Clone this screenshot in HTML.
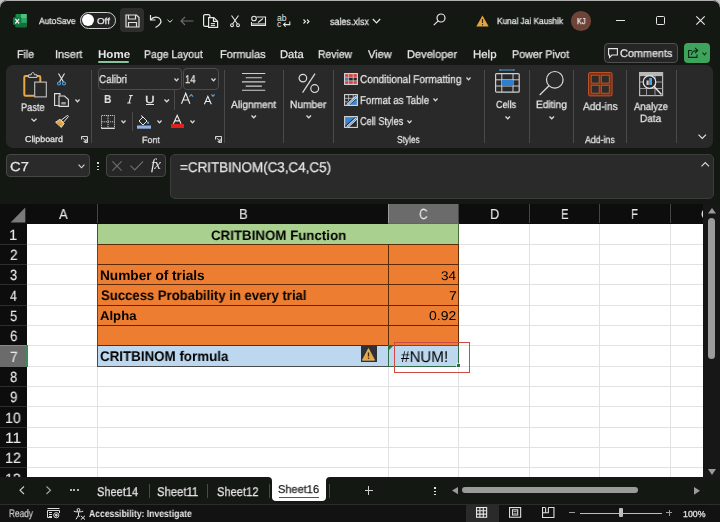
<!DOCTYPE html>
<html><head><meta charset="utf-8"><style>
html,body{margin:0;padding:0;width:720px;height:522px;overflow:hidden;background:#c4c4c4}
.t{position:absolute;white-space:nowrap;transform-origin:0 0;text-rendering:geometricPrecision;will-change:transform}
.a{position:absolute}
svg.a{overflow:visible}
</style></head><body>
<!-- window background -->
<div class=a style="left:0;top:0;width:720px;height:522px;background:#131812;border-radius:7px 7px 0 0;box-shadow:inset 0 1px 0 #b0b0b0"></div>
<!-- TITLE BAR -->
<svg class=a style="left:12.5px;top:13.8px" width="14" height="13.5" viewBox="0 0 14 13.5">
 <rect x="2.5" y="0" width="11.2" height="13.3" rx="1" fill="#1b8a4c"/>
 <rect x="8" y="0" width="5.7" height="4.5" fill="#4cc184"/><rect x="8" y="4.5" width="5.7" height="4.4" fill="#2fa866"/><rect x="2.5" y="8.9" width="11.2" height="4.4" fill="#176e3d"/>
 <rect x="0" y="3.2" width="8.4" height="7.9" rx="0.8" fill="#0f7a40"/>
 <path d="M2.3 4.9 L6.1 9.5 M6.1 4.9 L2.3 9.5" stroke="#f4f4f4" stroke-width="1.2"/>
</svg>
<div class=a style="left:79.9px;top:12px;width:33.7px;height:14.7px;border:1.3px solid #d0d0d0;border-radius:999px;background:#222"></div>
<div class=a style="left:82.4px;top:14.4px;width:11.9px;height:11.9px;border-radius:50%;background:#fff"></div>
<div class=a style="left:120.3px;top:8.3px;width:24px;height:23.7px;border-radius:4px;background:#2e2f2d"></div>
<svg class=a style="left:124.7px;top:14.2px" width="15" height="14" viewBox="0 0 15 14" fill="none" stroke="#e0e0e0" stroke-width="1.2">
 <path d="M1 1 H11.5 L14 3.5 V13 H1 Z"/><path d="M3.5 1 V5 H10.5 V1"/><path d="M3.5 13 V8.5 H11.5 V13"/>
</svg>
<svg class=a style="left:149px;top:14px" width="14" height="14" viewBox="0 0 14 14" fill="none" stroke="#e6e6e6" stroke-width="1.2">
 <path d="M1.5 1 V6 H6.5"/><path d="M1.8 5.8 C4 2.5 9.5 2 11.5 5.5 C13 8.5 11 11 6.5 13.5"/>
</svg>
<svg class=a style="left:166.5px;top:19px" width="6" height="4" viewBox="0 0 6 4" fill="none" stroke="#e6e6e6" stroke-width="1"><path d="M0.5 0.8 L3 3.2 L5.5 0.8"/></svg>
<svg class=a style="left:180px;top:16px" width="14" height="10" viewBox="0 0 14 10" fill="none" stroke="#6e6e6e" stroke-width="1.1"><path d="M13.5 5 H1 M5 1 L1 5 L5 9"/></svg>
<svg class=a style="left:203px;top:14px" width="16" height="14" viewBox="0 0 16 14" fill="none" stroke="#e6e6e6" stroke-width="1.2">
 <path d="M5 12.4 H2 A1.4 1.4 0 0 1 0.6 11 V2 A1.4 1.4 0 0 1 2 0.6 H5.5 A1.4 1.4 0 0 1 6.9 2 V3"/><path d="M5.6 3.6 H10.8 L14.6 7.2 V13.4 H5.6 Z"/><path d="M10.5 3.8 V7.4 H14.4"/><path d="M7.8 9.6 H12 M7.8 11.4 H12" stroke-width="1"/>
</svg>
<svg class=a style="left:229.5px;top:15px" width="10" height="12" viewBox="0 0 10 12" fill="none" stroke="#e6e6e6" stroke-width="1.1">
 <path d="M1.5 0.5 L7.5 9 M8.5 0.5 L2.5 9"/><circle cx="2" cy="10.2" r="1.4"/><circle cx="8" cy="10.2" r="1.4"/>
</svg>
<svg class=a style="left:250.5px;top:14.5px" width="15" height="11" viewBox="0 0 15 11" fill="none" stroke="#e6e6e6" stroke-width="1.1">
 <path d="M5.5 2 H14.5 V10.5 H0.5 V7"/><circle cx="3" cy="3.5" r="2.3"/><path d="M7 7.5 L12 3.5"/><path d="M1 9 H14"/>
</svg>
<svg class=a style="left:276.5px;top:14px" width="14" height="14" viewBox="0 0 14 14" fill="none" stroke="#e6e6e6" stroke-width="1.1">
 <text x="0" y="6.6" font-family="Liberation Sans" font-size="8.6" fill="#e6e6e6" stroke="none" textLength="9.5">ab</text>
 <text x="0" y="13" font-family="Liberation Sans" font-size="8.6" fill="#e6e6e6" stroke="none">c</text>
 <path d="M12.8 7.5 V10.6 H6.6 M8.6 8.6 L6.6 10.6 L8.6 12.6"/>
</svg>
<svg class=a style="left:303px;top:19px" width="7" height="5" viewBox="0 0 7 5" fill="none" stroke="#e6e6e6" stroke-width="1.1"><path d="M0.5 0.5 L2.5 2.5 L0.5 4.5 M4 0.5 L6 2.5 L4 4.5"/></svg>
<svg class=a style="left:372px;top:17.5px" width="9" height="6" viewBox="0 0 9 6" fill="none" stroke="#e6e6e6" stroke-width="1.2"><path d="M0.8 1 L4.5 4.8 L8.2 1"/></svg>
<svg class=a style="left:433px;top:13px" width="13" height="13" viewBox="0 0 13 13" fill="none" stroke="#e6e6e6" stroke-width="1.2"><circle cx="8" cy="5" r="4"/><path d="M5.2 7.8 L0.8 12.2"/></svg>
<svg class=a style="left:476px;top:14.5px" width="13" height="12" viewBox="0 0 13 12"><path d="M6.5 0.5 L12.7 11.6 H0.3 Z" fill="#e8a33d"/><path d="M6.5 4 V8" stroke="#3a2a10" stroke-width="1.2"/><circle cx="6.5" cy="9.8" r="0.7" fill="#3a2a10"/></svg>
<div class=a style="left:571.4px;top:11.2px;width:19.6px;height:19.6px;border-radius:50%;background:#6d4437"></div>
<div class=a style="left:616.3px;top:20px;width:9px;height:1.2px;background:#e6e6e6"></div>
<div class=a style="left:655.8px;top:16.3px;width:7.2px;height:6.8px;border:1.2px solid #e6e6e6;border-radius:1.5px"></div>
<svg class=a style="left:695.8px;top:16.3px" width="9" height="9" viewBox="0 0 9 9" fill="none" stroke="#e6e6e6" stroke-width="1.15"><path d="M0.3 0.3 L8.7 8.7 M8.7 0.3 L0.3 8.7"/></svg>
<!-- MENU -->
<div class=a style="left:98.4px;top:61.2px;width:31px;height:1.8px;background:#86c59c;border-radius:1px"></div>
<div class=a style="left:604.3px;top:43.2px;width:71.5px;height:17.7px;border:1px solid #4f4f4f;border-radius:4px;background:#252525"></div>
<svg class=a style="left:607.5px;top:48px" width="10" height="10" viewBox="0 0 10 10" fill="none" stroke="#e6e6e6" stroke-width="1.1"><path d="M0.6 0.6 H9.4 V7 H4 L1.5 9.4 V7 H0.6 Z"/></svg>
<div class=a style="left:684.3px;top:43.2px;width:25.8px;height:19.5px;border-radius:4px;background:#3fa45b"></div>
<svg class=a style="left:688px;top:47px" width="11" height="11" viewBox="0 0 11 11" fill="none" stroke="#0d2a16" stroke-width="1.1"><path d="M4 3.5 H0.6 V10.4 H9 V7.5"/><path d="M3.5 8 C3.5 4.5 6 3.5 9 3.5 M7 1 L9.8 3.5 L7 6"/></svg>
<svg class=a style="left:702.3px;top:51.5px" width="5" height="3.5" viewBox="0 0 5 3.5" fill="none" stroke="#0d2a16" stroke-width="1.1"><path d="M0.5 0.5 L2.5 2.8 L4.5 0.5"/></svg>
<!-- RIBBON -->
<div class=a style="left:6px;top:65px;width:707.3px;height:82.7px;background:#292929;border-radius:7px"></div>
<!-- ribbon separators -->
<div class=a style="left:90.5px;top:69.6px;width:1px;height:73px;background:#4a4a4a"></div>
<div class=a style="left:224.3px;top:69.6px;width:1px;height:73px;background:#4a4a4a"></div>
<div class=a style="left:283.2px;top:69.6px;width:1px;height:73px;background:#4a4a4a"></div>
<div class=a style="left:333.3px;top:69.6px;width:1px;height:73px;background:#4a4a4a"></div>
<div class=a style="left:484.2px;top:69.6px;width:1px;height:73px;background:#4a4a4a"></div>
<div class=a style="left:529px;top:69.6px;width:1px;height:73px;background:#4a4a4a"></div>
<div class=a style="left:573.3px;top:69.6px;width:1px;height:73px;background:#4a4a4a"></div>
<div class=a style="left:625.5px;top:69.6px;width:1px;height:73px;background:#4a4a4a"></div>
<div class=a style="left:676.3px;top:69.6px;width:1px;height:73px;background:#4a4a4a"></div>
<div class=a style="left:174.3px;top:90.2px;width:1px;height:19.5px;background:#4a4a4a"></div>
<div class=a style="left:131.5px;top:112.2px;width:1px;height:18.8px;background:#4a4a4a"></div>
<!-- clipboard -->
<svg class=a style="left:23px;top:72px" width="25" height="26" viewBox="0 0 25 26" fill="none">
 <path d="M5.2 4 H2.6 Q1.3 4 1.3 5.3 V22.5 Q1.3 23.8 2.6 23.8 H11.4" stroke="#e8a93f" stroke-width="2"/>
 <path d="M14 4 H16 Q17.3 4 17.3 5.3 V10" stroke="#e8a93f" stroke-width="2"/>
 <path d="M5.6 5.4 V2.8 H8.2 C8.2 1.2 9 0.5 9.8 0.5 C10.6 0.5 11.4 1.2 11.4 2.8 H14 V5.4 Z" stroke="#d0d0d0" stroke-width="1"/>
 <rect x="11.7" y="10.1" width="11.6" height="14.8" stroke="#c4c4c4" stroke-width="1.1"/>
</svg>
<svg class=a style="left:31px;top:117.5px" width="6" height="4" viewBox="0 0 6 4" fill="none" stroke="#dcdcdc" stroke-width="1.25"><path d="M0.5 0.8 L3 3.2 L5.5 0.8"/></svg>
<svg class=a style="left:57.3px;top:72.5px" width="9" height="12.5" viewBox="0 0 9 12.5" fill="none" stroke-width="1.1">
 <path d="M1.5 0.5 L6.5 9 M7.5 0.5 L2.5 9" stroke="#e6e6e6"/><circle cx="2" cy="10.5" r="1.5" stroke="#4aa3e0"/><circle cx="7" cy="10.5" r="1.5" stroke="#4aa3e0"/>
</svg>
<svg class=a style="left:54.3px;top:93px" width="15" height="14" viewBox="0 0 15 14" fill="none" stroke="#e0e0e0" stroke-width="1.1">
 <path d="M5.5 12.5 H0.6 V0.6 H6 V2.5"/><path d="M5 3 H10.5 L14.4 6.5 V13.4 H5 Z"/><rect x="7.3" y="9" width="4.5" height="2.5" fill="#9a9a9a" stroke="none"/>
</svg>
<svg class=a style="left:75px;top:99px" width="5" height="3.5" viewBox="0 0 5 3.5" fill="none" stroke="#dcdcdc" stroke-width="1.25"><path d="M0.5 0.5 L2.5 2.8 L4.5 0.5"/></svg>
<svg class=a style="left:55px;top:114.5px" width="14" height="13" viewBox="0 0 14 13" fill="none">
 <path d="M0.6 7.2 L5 4.2 L9.2 8.6 L6.3 12.4 Z" fill="#e8a93f" stroke="#f0f0f0" stroke-width="0.8"/>
 <path d="M2 9.5 L4.5 8 M3.5 11 L6 9" stroke="#b07020" stroke-width="0.6"/>
 <path d="M6.2 5.2 L8.3 7.4 L13.2 1.8 Q13.6 1.2 13 0.7 Q12.4 0.3 11.9 0.8 Z" stroke="#e6e6e6" stroke-width="1"/>
</svg>
<svg class=a style="left:81px;top:136px" width="7" height="7" viewBox="0 0 7 7" fill="none" stroke="#d8d8d8" stroke-width="1"><path d="M0.5 3.5 V0.5 H6.5 V6.5 H3.5"/><path d="M1.5 1.8 L5.2 5.4 M2.6 5.4 H5.2 V2.8"/></svg>
<!-- font group -->
<div class=a style="left:98.2px;top:68.2px;width:81.7px;height:19.5px;border:1px solid #4d4d4d;border-radius:4px"></div>
<div class=a style="left:183px;top:68.2px;width:33.8px;height:19.5px;border:1px solid #4d4d4d;border-radius:4px"></div>
<svg class=a style="left:174px;top:77.5px" width="5" height="3.5" viewBox="0 0 5 3.5" fill="none" stroke="#dcdcdc" stroke-width="1.25"><path d="M0.5 0.5 L2.5 2.8 L4.5 0.5"/></svg>
<svg class=a style="left:211px;top:77.5px" width="5" height="3.5" viewBox="0 0 5 3.5" fill="none" stroke="#dcdcdc" stroke-width="1.25"><path d="M0.5 0.5 L2.5 2.8 L4.5 0.5"/></svg>
<svg class=a style="left:127px;top:95px" width="6" height="8.5" viewBox="0 0 6 8.5" fill="none" stroke="#e6e6e6" stroke-width="1.1"><path d="M2.2 0.5 H5.8 M0.2 8 H3.8 M4 0.5 L2 8"/></svg>
<div class=a style="left:146.4px;top:104.2px;width:7.8px;height:1px;background:#e6e6e6"></div>
<svg class=a style="left:164px;top:98.8px" width="5.5" height="3.5" viewBox="0 0 5.5 3.5" fill="none" stroke="#dcdcdc" stroke-width="1.25"><path d="M0.5 0.5 L2.75 2.8 L5 0.5"/></svg>
<svg class=a style="left:180.8px;top:93.2px" width="10" height="11" viewBox="0 0 10 11" fill="none" stroke="#ececec" stroke-width="1.15"><path d="M0.5 10.8 L4.7 0.4 L8.9 10.8 M2.1 7 H7.3"/></svg>
<svg class=a style="left:189px;top:94px" width="4.5" height="3" viewBox="0 0 4.5 3" fill="none" stroke="#5aa0d8" stroke-width="1.1"><path d="M0.4 2.6 L2.25 0.6 L4.1 2.6"/></svg>
<svg class=a style="left:203.6px;top:96px" width="8" height="8.5" viewBox="0 0 8 8.5" fill="none" stroke="#ececec" stroke-width="1.1"><path d="M0.4 8.3 L3.85 0.3 L7.3 8.3 M1.7 5.5 H6"/></svg>
<svg class=a style="left:210.9px;top:94.3px" width="4" height="2.8" viewBox="0 0 4 2.8" fill="none" stroke="#5aa0d8" stroke-width="1.1"><path d="M0.4 0.4 L2 2.3 L3.6 0.4"/></svg>
<svg class=a style="left:100.7px;top:114.5px" width="14" height="14" viewBox="0 0 14 14" fill="none" stroke="#cfcfcf" stroke-width="1"><path d="M0.5 13 V0.5 H13.5 V13 M7 0.5 V13 M0.5 6.8 H13.5" stroke-dasharray="1.2 0.9"/><path d="M0.2 13.3 H13.8" stroke="#e6e6e6" stroke-width="1.3"/></svg>
<svg class=a style="left:121px;top:119.8px" width="5" height="3.5" viewBox="0 0 5 3.5" fill="none" stroke="#dcdcdc" stroke-width="1.25"><path d="M0.5 0.5 L2.5 2.8 L4.5 0.5"/></svg>
<svg class=a style="left:136.7px;top:114.5px" width="14" height="14" viewBox="0 0 14 14" fill="none">
 <path d="M2 6 L6 2 L10 6 L6 10 Z" stroke="#e6e6e6" stroke-width="1"/><path d="M4 0.5 L6 2" stroke="#e6e6e6" stroke-width="1"/><path d="M11 6 C12.5 7.5 12.5 9 11 9 C9.5 9 9.5 7.5 11 6" fill="#4aa3e0"/>
 <rect x="0" y="10.5" width="14" height="3.2" fill="#8fb4e3"/>
</svg>
<svg class=a style="left:157px;top:119.8px" width="5" height="3.5" viewBox="0 0 5 3.5" fill="none" stroke="#dcdcdc" stroke-width="1.25"><path d="M0.5 0.5 L2.5 2.8 L4.5 0.5"/></svg>
<svg class=a style="left:173.3px;top:114.8px" width="8.5" height="9" viewBox="0 0 8.5 9" fill="none" stroke="#ececec" stroke-width="1.1"><path d="M0.4 8.8 L4.2 0.3 L8 8.8 M1.7 5.9 H6.7"/></svg>
<div class=a style="left:170.8px;top:124.2px;width:13.1px;height:3.4px;background:#e0201c"></div>
<svg class=a style="left:190.2px;top:119.8px" width="5" height="3.5" viewBox="0 0 5 3.5" fill="none" stroke="#dcdcdc" stroke-width="1.25"><path d="M0.5 0.5 L2.5 2.8 L4.5 0.5"/></svg>
<svg class=a style="left:214.5px;top:136.3px" width="7" height="7" viewBox="0 0 7 7" fill="none" stroke="#d8d8d8" stroke-width="1"><path d="M0.5 3.5 V0.5 H6.5 V6.5 H3.5"/><path d="M1.5 1.8 L5.2 5.4 M2.6 5.4 H5.2 V2.8"/></svg>
<!-- alignment -->
<svg class=a style="left:241.9px;top:73px" width="24" height="18" viewBox="0 0 24 18" stroke="#cfcfcf" stroke-width="1.1">
 <path d="M0 0.5 H23.3 M3.7 4.7 H19.9 M0 8.9 H23.3 M3.7 13.1 H19.9 M0 17.3 H23.3"/>
</svg>
<svg class=a style="left:250.9px;top:115.3px" width="5.5" height="3.5" viewBox="0 0 5.5 3.5" fill="none" stroke="#dcdcdc" stroke-width="1.25"><path d="M0.5 0.5 L2.75 2.8 L5 0.5"/></svg>
<svg class=a style="left:298px;top:72.5px" width="22" height="21" viewBox="0 0 22 21" fill="none" stroke="#dcdcdc" stroke-width="1.2">
 <circle cx="4.9" cy="5.1" r="3.8"/><circle cx="16.7" cy="15.6" r="3.9"/><path d="M17 0.6 L4.6 19.6"/>
</svg>
<svg class=a style="left:305.5px;top:115.3px" width="5.5" height="3.5" viewBox="0 0 5.5 3.5" fill="none" stroke="#dcdcdc" stroke-width="1.25"><path d="M0.5 0.5 L2.75 2.8 L5 0.5"/></svg>
<!-- styles -->
<svg class=a style="left:343.8px;top:72.5px" width="14" height="12" viewBox="0 0 14 12" fill="none">
 <rect x="1" y="1" width="12" height="3" fill="#e03c3c"/><rect x="1" y="8" width="12" height="3" fill="#e03c3c"/><rect x="1.2" y="4.5" width="3" height="3" fill="#3a7fd0"/>
 <path d="M4.6 0.6 V11.4 M9.2 0.6 V11.4 M0.6 4.3 H13.4 M0.6 7.8 H13.4" stroke="#c8c8c8" stroke-width="0.8"/>
 <rect x="0.6" y="0.6" width="12.8" height="10.8" stroke="#d8d8d8" stroke-width="1.1"/>
</svg>
<svg class=a style="left:465.6px;top:77px" width="5" height="3.5" viewBox="0 0 5 3.5" fill="none" stroke="#dcdcdc" stroke-width="1.25"><path d="M0.5 0.5 L2.5 2.8 L4.5 0.5"/></svg>
<svg class=a style="left:343.8px;top:94.2px" width="14" height="12" viewBox="0 0 14 12" fill="none">
 <path d="M5 11.4 L13.4 4.5 V11.4 Z" fill="#3a86d0"/>
 <path d="M4.6 0.6 V7 M9.2 0.6 V5 M0.6 4.3 H13.4 M0.6 7.8 H4" stroke="#c8c8c8" stroke-width="0.8"/>
 <rect x="0.6" y="0.6" width="12.8" height="10.8" stroke="#d8d8d8" stroke-width="1.1"/>
 <path d="M3.2 11.2 L12.8 2.2" stroke="#e8e8e8" stroke-width="2.4"/><path d="M3.2 11.2 L12.8 2.2" stroke="#3a86d0" stroke-width="1"/>
</svg>
<svg class=a style="left:432.7px;top:98px" width="5" height="3.5" viewBox="0 0 5 3.5" fill="none" stroke="#dcdcdc" stroke-width="1.25"><path d="M0.5 0.5 L2.5 2.8 L4.5 0.5"/></svg>
<svg class=a style="left:343.8px;top:115.5px" width="14" height="12" viewBox="0 0 14 12" fill="none">
 <path d="M1 1 H11 L1 10 Z" fill="#3a86d0"/>
 <rect x="0.6" y="0.6" width="12.8" height="10.8" stroke="#d8d8d8" stroke-width="1.1"/>
 <path d="M3.2 11.2 L12.8 2.2" stroke="#e8e8e8" stroke-width="2.4"/><path d="M3.2 11.2 L12.8 2.2" stroke="#3a86d0" stroke-width="1"/>
</svg>
<svg class=a style="left:407px;top:119.5px" width="5" height="3.5" viewBox="0 0 5 3.5" fill="none" stroke="#dcdcdc" stroke-width="1.25"><path d="M0.5 0.5 L2.5 2.8 L4.5 0.5"/></svg>
<!-- cells -->
<svg class=a style="left:494.8px;top:69px" width="25" height="24" viewBox="0 0 25 24" fill="none">
 <path d="M5 1 H19 M5 0 V2 M19 0 V2" stroke="#4aa3e0" stroke-width="1"/>
 <rect x="0.6" y="4.6" width="23.6" height="18.6" rx="1" stroke="#cfcfcf" stroke-width="1.2"/>
 <path d="M6.8 4.6 V23.2 M18 4.6 V23.2 M0.6 10.8 H24.2 M0.6 17 H24.2" stroke="#cfcfcf" stroke-width="1"/>
 <rect x="7" y="11" width="11" height="5.8" fill="#2f7fd0"/>
</svg>
<svg class=a style="left:504.5px;top:116px" width="5.5" height="3.5" viewBox="0 0 5.5 3.5" fill="none" stroke="#dcdcdc" stroke-width="1.25"><path d="M0.5 0.5 L2.75 2.8 L5 0.5"/></svg>
<svg class=a style="left:538.5px;top:71px" width="25" height="25" viewBox="0 0 25 25" fill="none" stroke="#dcdcdc" stroke-width="1.2">
 <circle cx="15.8" cy="8.8" r="8.3"/><path d="M10 14.8 L0.7 24"/>
</svg>
<svg class=a style="left:548.5px;top:116px" width="5.5" height="3.5" viewBox="0 0 5.5 3.5" fill="none" stroke="#dcdcdc" stroke-width="1.25"><path d="M0.5 0.5 L2.75 2.8 L5 0.5"/></svg>
<!-- add-ins -->
<svg class=a style="left:587.7px;top:72px" width="25" height="25" viewBox="0 0 25 25" fill="none">
 <rect x="0.5" y="0.5" width="23.6" height="23.4" rx="1.5" fill="#7e2f12" stroke="#c3592c" stroke-width="0.9"/>
 <rect x="3.2" y="3.2" width="8" height="7.9" fill="#2d2b2a" stroke="#c3592c" stroke-width="0.9"/><rect x="13.3" y="3.2" width="8" height="7.9" fill="#2d2b2a" stroke="#c3592c" stroke-width="0.9"/>
 <rect x="3.2" y="13.3" width="8" height="7.9" fill="#2d2b2a" stroke="#c3592c" stroke-width="0.9"/><rect x="13.3" y="13.3" width="8" height="7.9" fill="#2d2b2a" stroke="#c3592c" stroke-width="0.9"/>
</svg>
<!-- analyze -->
<svg class=a style="left:639.2px;top:72px" width="25" height="25" viewBox="0 0 25 25" fill="none">
 <rect x="0.6" y="0.6" width="23" height="23" stroke="#b8b8b8" stroke-width="1.2" fill="#2a2a2a"/>
 <rect x="0.6" y="0.6" width="23" height="3.5" fill="#b8b8b8"/>
 <path d="M0.6 10 H23.6 M0.6 16.5 H23.6 M7.5 4 V23.6 M16 4 V23.6" stroke="#9a9a9a" stroke-width="1"/>
 <circle cx="10.5" cy="10" r="6.3" fill="#262626" stroke="#e6e6e6" stroke-width="1.2"/>
 <rect x="7.5" y="8.5" width="2.2" height="4.5" fill="#cfcfcf"/><rect x="10.2" y="6" width="2.8" height="7" fill="#4aa3e0"/>
 <path d="M15 14.5 L22.5 22.5" stroke="#e6e6e6" stroke-width="1.4"/>
</svg>
<svg class=a style="left:697.5px;top:133.8px" width="8.5" height="5" viewBox="0 0 8.5 5" fill="none" stroke="#e6e6e6" stroke-width="1.1"><path d="M0.5 0.6 L4.25 4.4 L8 0.6"/></svg>
<!-- FORMULA BAR -->
<div class=a style="left:6.1px;top:154.4px;width:81.6px;height:21.1px;background:#2a2a2a;border:1px solid #464646;border-radius:4px"></div>
<svg class=a style="left:77.5px;top:164.3px" width="7" height="4.5" viewBox="0 0 7 4.5" fill="none" stroke="#dcdcdc" stroke-width="1.1"><path d="M0.6 0.6 L3.5 3.8 L6.4 0.6"/></svg>
<div class=a style="left:97.3px;top:162.3px;width:1.6px;height:1.6px;background:#cfcfcf"></div>
<div class=a style="left:97.3px;top:165.6px;width:1.6px;height:1.6px;background:#cfcfcf"></div>
<div class=a style="left:97.3px;top:168.9px;width:1.6px;height:1.6px;background:#cfcfcf"></div>
<div class=a style="left:106.4px;top:154.4px;width:58.1px;height:21.1px;background:#262626;border:1px solid #464646;border-radius:4px"></div>
<svg class=a style="left:111.5px;top:161px" width="10" height="10" viewBox="0 0 10 10" fill="none" stroke="#707070" stroke-width="1.1"><path d="M0.4 0.4 L9.6 9.6 M9.6 0.4 L0.4 9.6"/></svg>
<svg class=a style="left:129.7px;top:161px" width="13.5" height="9.5" viewBox="0 0 13.5 9.5" fill="none" stroke="#707070" stroke-width="1.1"><path d="M0.4 4.6 L4.8 9 L13.1 0.4"/></svg>
<div class=t style="left:151.3px;top:157.6px;font:italic 15px/15px 'Liberation Serif';color:#e6e6e6;letter-spacing:-1px">fx</div>
<div class=a style="left:170.3px;top:154.2px;width:541.6px;height:42.8px;background:#2a2a2a;border:1px solid #3c3c3c;border-radius:5px"></div>
<svg class=a style="left:701.3px;top:162.4px" width="8.5" height="5" viewBox="0 0 8.5 5" fill="none" stroke="#dcdcdc" stroke-width="1.1"><path d="M0.5 4.4 L4.25 0.6 L8 4.4"/></svg>
<div class=a style="left:0;top:204px;width:703px;height:20px;background:#0d0d0d"></div>
<div class=a style="left:0;top:223px;width:27px;height:254px;background:#0d0d0d"></div>
<svg class=a style="left:9.5px;top:206.5px" width="16" height="16" viewBox="0 0 16 16"><path d="M15.3 0.6 V15.4 H0.6 Z" fill="#7a7a7a"/></svg>
<div class=a style="left:388px;top:204px;width:70px;height:19px;background:#6b6b6b"></div>
<div class=a style="left:388px;top:204px;width:1px;height:19px;background:#9c9c9c"></div>
<div class=a style="left:388px;top:223px;width:71px;height:1px;background:#3c7a52"></div>
<div class=a style="left:97px;top:204px;width:1px;height:19px;background:#454545"></div>
<div class=a style="left:458px;top:204px;width:1px;height:19px;background:#454545"></div>
<div class=a style="left:529px;top:204px;width:1px;height:19px;background:#454545"></div>
<div class=a style="left:599px;top:204px;width:1px;height:19px;background:#454545"></div>
<div class=a style="left:670px;top:204px;width:1px;height:19px;background:#454545"></div>
<div class=a style="left:27px;top:224px;width:676px;height:253px;background:#fff"></div>
<div class=a style="left:27px;top:244px;width:676px;height:1px;background:#e2e2e2"></div>
<div class=a style="left:0;top:244px;width:27px;height:1px;background:#2e2e2e"></div>
<div class=a style="left:27px;top:264px;width:676px;height:1px;background:#e2e2e2"></div>
<div class=a style="left:0;top:264px;width:27px;height:1px;background:#2e2e2e"></div>
<div class=a style="left:27px;top:284px;width:676px;height:1px;background:#e2e2e2"></div>
<div class=a style="left:0;top:284px;width:27px;height:1px;background:#2e2e2e"></div>
<div class=a style="left:27px;top:305px;width:676px;height:1px;background:#e2e2e2"></div>
<div class=a style="left:0;top:305px;width:27px;height:1px;background:#2e2e2e"></div>
<div class=a style="left:27px;top:325px;width:676px;height:1px;background:#e2e2e2"></div>
<div class=a style="left:0;top:325px;width:27px;height:1px;background:#2e2e2e"></div>
<div class=a style="left:27px;top:345px;width:676px;height:1px;background:#e2e2e2"></div>
<div class=a style="left:0;top:345px;width:27px;height:1px;background:#2e2e2e"></div>
<div class=a style="left:27px;top:366px;width:676px;height:1px;background:#e2e2e2"></div>
<div class=a style="left:0;top:366px;width:27px;height:1px;background:#2e2e2e"></div>
<div class=a style="left:27px;top:386px;width:676px;height:1px;background:#e2e2e2"></div>
<div class=a style="left:0;top:386px;width:27px;height:1px;background:#2e2e2e"></div>
<div class=a style="left:27px;top:406px;width:676px;height:1px;background:#e2e2e2"></div>
<div class=a style="left:0;top:406px;width:27px;height:1px;background:#2e2e2e"></div>
<div class=a style="left:27px;top:427px;width:676px;height:1px;background:#e2e2e2"></div>
<div class=a style="left:0;top:427px;width:27px;height:1px;background:#2e2e2e"></div>
<div class=a style="left:27px;top:447px;width:676px;height:1px;background:#e2e2e2"></div>
<div class=a style="left:0;top:447px;width:27px;height:1px;background:#2e2e2e"></div>
<div class=a style="left:27px;top:467px;width:676px;height:1px;background:#e2e2e2"></div>
<div class=a style="left:0;top:467px;width:27px;height:1px;background:#2e2e2e"></div>
<div class=a style="left:97px;top:224px;width:1px;height:253px;background:#e2e2e2"></div>
<div class=a style="left:388px;top:224px;width:1px;height:253px;background:#e2e2e2"></div>
<div class=a style="left:458px;top:224px;width:1px;height:253px;background:#e2e2e2"></div>
<div class=a style="left:529px;top:224px;width:1px;height:253px;background:#e2e2e2"></div>
<div class=a style="left:599px;top:224px;width:1px;height:253px;background:#e2e2e2"></div>
<div class=a style="left:670px;top:224px;width:1px;height:253px;background:#e2e2e2"></div>
<div class=a style="left:0;top:345px;width:27px;height:22px;background:#6b6b6b"></div>
<div class=a style="left:0;top:345px;width:27px;height:1px;background:#8a8a8a"></div>
<div class=a style="left:26px;top:345px;width:1.5px;height:22px;background:#3f8a5a"></div>
<div class=a style="left:97px;top:224px;width:362px;height:20px;background:#a9d08e"></div>
<div class=a style="left:97px;top:244px;width:362px;height:101px;background:#ed7d31"></div>
<div class=a style="left:97px;top:345px;width:362px;height:22px;background:#bdd7ee"></div>
<div class=a style="left:97px;top:244px;width:362px;height:1px;background:#5e2a06"></div>
<div class=a style="left:97px;top:264px;width:362px;height:1px;background:#5e2a06"></div>
<div class=a style="left:97px;top:284px;width:362px;height:1px;background:#5e2a06"></div>
<div class=a style="left:97px;top:305px;width:362px;height:1px;background:#5e2a06"></div>
<div class=a style="left:97px;top:325px;width:362px;height:1px;background:#5e2a06"></div>
<div class=a style="left:97px;top:345px;width:362px;height:1px;background:#5e2a06"></div>
<div class=a style="left:97px;top:366px;width:362px;height:1px;background:#4a4a4a"></div>
<div class=a style="left:97px;top:224px;width:1px;height:143px;background:#4a4a4a"></div>
<div class=a style="left:388px;top:244px;width:1px;height:101px;background:#5e2a06"></div>
<div class=a style="left:458px;top:224px;width:1px;height:121px;background:#5e2a06"></div>
<div class=a style="left:458px;top:224px;width:1px;height:20px;background:#4d6b3a"></div>
<div class=a style="left:361px;top:346.2px;width:16px;height:16px;background:#2f3134"></div>
<svg class=a style="left:362.3px;top:347.6px" width="13" height="13" viewBox="0 0 13 13"><path d="M6.5 0.6 L12.6 12.2 H0.4 Z" fill="#e9a53e" stroke="#f3c77a" stroke-width="0.7"/><path d="M6.5 4.5 V8.5" stroke="#3a2a10" stroke-width="1.3"/><circle cx="6.5" cy="10.3" r="0.75" fill="#3a2a10"/></svg>
<div class=a style="left:388px;top:345px;width:71px;height:22px;border:1px solid #2f6b45;box-sizing:border-box"></div>
<div class=a style="left:457px;top:364px;width:3px;height:3px;background:#2f6b45;box-shadow:0 0 0 0.6px #fff"></div>
<svg class=a style="left:389px;top:346px" width="4" height="4" viewBox="0 0 4 4"><path d="M0 0 H4 L0 4 Z" fill="#1f7a3a"/></svg>
<div class=a style="left:393.7px;top:341.6px;width:76.3px;height:31.3px;border:1.9px solid #cc4b45;box-sizing:border-box"></div>

<div class=t style="left:38.70px;top:17px;font:9.012px 'Liberation Sans';line-height:9.012px;color:#e6e6e6;-webkit-text-stroke:0.25px #e6e6e6;transform:scaleX(0.937)">AutoSave</div><div class=t style="left:97.11px;top:17px;font:8.576px 'Liberation Sans';line-height:8.576px;color:#e6e6e6;-webkit-text-stroke:0.25px #e6e6e6;transform:scaleX(1.141)">Off</div><div class=t style="left:329.52px;top:18px;font:10.029px 'Liberation Sans';line-height:10.029px;color:#e6e6e6;-webkit-text-stroke:0.25px #e6e6e6;transform:scaleX(0.894)">sales.xlsx</div><div class=t style="left:497.33px;top:17px;font:8.866px 'Liberation Sans';line-height:8.866px;color:#e6e6e6;-webkit-text-stroke:0.25px #e6e6e6;transform:scaleX(0.938)">Kunal Jai Kaushik</div><div class=t style="left:577.12px;top:17px;font:8.576px 'Liberation Sans';line-height:8.576px;color:#f0f0f0;-webkit-text-stroke:0.25px #f0f0f0;transform:scaleX(0.848)">KJ</div><div class=t style="left:16.75px;top:50px;font:11.192px 'Liberation Sans';line-height:11.192px;color:#e6e6e6;-webkit-text-stroke:0.25px #e6e6e6;transform:scaleX(0.950)">File</div><div class=t style="left:54.51px;top:50px;font:11.192px 'Liberation Sans';line-height:11.192px;color:#e6e6e6;-webkit-text-stroke:0.25px #e6e6e6;transform:scaleX(0.981)">Insert</div><div class=t style="left:97.71px;top:50px;font:bold 11.192px 'Liberation Sans';line-height:11.192px;color:#e6e6e6;transform:scaleX(1.032)">Home</div><div class=t style="left:144.16px;top:50px;font:11.192px 'Liberation Sans';line-height:11.192px;color:#e6e6e6;-webkit-text-stroke:0.25px #e6e6e6;transform:scaleX(0.936)">Page Layout</div><div class=t style="left:219.92px;top:50px;font:11.192px 'Liberation Sans';line-height:11.192px;color:#e6e6e6;-webkit-text-stroke:0.25px #e6e6e6;transform:scaleX(0.980)">Formulas</div><div class=t style="left:279.60px;top:50px;font:11.192px 'Liberation Sans';line-height:11.192px;color:#e6e6e6;-webkit-text-stroke:0.25px #e6e6e6;transform:scaleX(1.000)">Data</div><div class=t style="left:318.07px;top:50px;font:11.192px 'Liberation Sans';line-height:11.192px;color:#e6e6e6;-webkit-text-stroke:0.25px #e6e6e6;transform:scaleX(0.928)">Review</div><div class=t style="left:368.00px;top:50px;font:11.192px 'Liberation Sans';line-height:11.192px;color:#e6e6e6;-webkit-text-stroke:0.25px #e6e6e6;transform:scaleX(0.982)">View</div><div class=t style="left:406.92px;top:50px;font:11.192px 'Liberation Sans';line-height:11.192px;color:#e6e6e6;-webkit-text-stroke:0.25px #e6e6e6;transform:scaleX(0.985)">Developer</div><div class=t style="left:472.68px;top:50px;font:11.192px 'Liberation Sans';line-height:11.192px;color:#e6e6e6;-webkit-text-stroke:0.25px #e6e6e6;transform:scaleX(1.022)">Help</div><div class=t style="left:511.64px;top:50px;font:11.192px 'Liberation Sans';line-height:11.192px;color:#e6e6e6;-webkit-text-stroke:0.25px #e6e6e6;transform:scaleX(0.958)">Power Pivot</div><div class=t style="left:620.46px;top:49px;font:11.047px 'Liberation Sans';line-height:11.047px;color:#e6e6e6;-webkit-text-stroke:0.25px #e6e6e6;transform:scaleX(0.984)">Comments</div><div class=t style="left:20.86px;top:103px;font:11.047px 'Liberation Sans';line-height:11.047px;color:#e6e6e6;-webkit-text-stroke:0.25px #e6e6e6;transform:scaleX(0.838)">Paste</div><div class=t style="left:24.56px;top:135px;font:8.576px 'Liberation Sans';line-height:8.576px;color:#e6e6e6;-webkit-text-stroke:0.25px #e6e6e6;transform:scaleX(1.034)">Clipboard</div><div class=t style="left:99.21px;top:75px;font:11.337px 'Liberation Sans';line-height:11.337px;color:#e6e6e6;-webkit-text-stroke:0.25px #e6e6e6;transform:scaleX(0.872)">Calibri</div><div class=t style="left:184.63px;top:75px;font:11.337px 'Liberation Sans';line-height:11.337px;color:#e6e6e6;-webkit-text-stroke:0.25px #e6e6e6;transform:scaleX(0.842)">14</div><div class=t style="left:141.79px;top:136px;font:9.012px 'Liberation Sans';line-height:9.012px;color:#e6e6e6;-webkit-text-stroke:0.25px #e6e6e6;transform:scaleX(0.987)">Font</div><div class=t style="left:231.00px;top:101px;font:10.32px 'Liberation Sans';line-height:10.32px;color:#e6e6e6;-webkit-text-stroke:0.25px #e6e6e6;transform:scaleX(0.984)">Alignment</div><div class=t style="left:289.98px;top:101px;font:10.465px 'Liberation Sans';line-height:10.465px;color:#e6e6e6;-webkit-text-stroke:0.25px #e6e6e6;transform:scaleX(0.977)">Number</div><div class=t style="left:360.20px;top:75px;font:11.337px 'Liberation Sans';line-height:11.337px;color:#e6e6e6;-webkit-text-stroke:0.25px #e6e6e6;transform:scaleX(0.890)">Conditional Formatting</div><div class=t style="left:359.93px;top:96px;font:11.337px 'Liberation Sans';line-height:11.337px;color:#e6e6e6;-webkit-text-stroke:0.25px #e6e6e6;transform:scaleX(0.853)">Format as Table</div><div class=t style="left:360.24px;top:117px;font:11.337px 'Liberation Sans';line-height:11.337px;color:#e6e6e6;-webkit-text-stroke:0.25px #e6e6e6;transform:scaleX(0.809)">Cell Styles</div><div class=t style="left:397.47px;top:136px;font:10.174px 'Liberation Sans';line-height:10.174px;color:#e6e6e6;-webkit-text-stroke:0.25px #e6e6e6;transform:scaleX(0.822)">Styles</div><div class=t style="left:496.45px;top:101px;font:10.32px 'Liberation Sans';line-height:10.32px;color:#e6e6e6;-webkit-text-stroke:0.25px #e6e6e6;transform:scaleX(0.877)">Cells</div><div class=t style="left:535.69px;top:101px;font:10.465px 'Liberation Sans';line-height:10.465px;color:#e6e6e6;-webkit-text-stroke:0.25px #e6e6e6;transform:scaleX(0.965)">Editing</div><div class=t style="left:582.50px;top:102px;font:10.901px 'Liberation Sans';line-height:10.901px;color:#e6e6e6;-webkit-text-stroke:0.25px #e6e6e6;transform:scaleX(0.939)">Add-ins</div><div class=t style="left:584.60px;top:136px;font:9.884px 'Liberation Sans';line-height:9.884px;color:#e6e6e6;-webkit-text-stroke:0.25px #e6e6e6;transform:scaleX(0.891)">Add-ins</div><div class=t style="left:634.20px;top:102px;font:10.61px 'Liberation Sans';line-height:10.61px;color:#e6e6e6;-webkit-text-stroke:0.25px #e6e6e6;transform:scaleX(0.902)">Analyze</div><div class=t style="left:640.00px;top:114px;font:10.61px 'Liberation Sans';line-height:10.61px;color:#e6e6e6;-webkit-text-stroke:0.25px #e6e6e6;transform:scaleX(0.947)">Data</div><div class=t style="left:103.98px;top:94px;font:bold 11.628px 'Liberation Sans';line-height:11.628px;color:#e6e6e6;transform:scaleX(0.888)">B</div><div class=t style="left:145.46px;top:96px;font:10.32px 'Liberation Sans';line-height:10.32px;color:#e6e6e6;-webkit-text-stroke:0.25px #e6e6e6;transform:scaleX(1.303)">U</div><div class=t style="left:9.56px;top:161px;font:12.936px 'Liberation Sans';line-height:12.936px;color:#e6e6e6;-webkit-text-stroke:0.25px #e6e6e6;transform:scaleX(1.144)">C7</div><div class=t style="left:180.26px;top:160px;font:14.099px 'Liberation Sans';line-height:14.099px;color:#e6e6e6;-webkit-text-stroke:0.25px #e6e6e6;transform:scaleX(0.953)">=CRITBINOM(C3,C4,C5)</div><div class=t style="left:58.70px;top:208px;font:14.535px 'Liberation Sans';line-height:14.535px;color:#e8e8e8;-webkit-text-stroke:0.1px #e8e8e8;transform:scaleX(0.904)">A</div><div class=t style="left:238.95px;top:208px;font:14.535px 'Liberation Sans';line-height:14.535px;color:#e8e8e8;-webkit-text-stroke:0.1px #e8e8e8;transform:scaleX(0.905)">B</div><div class=t style="left:419.20px;top:208px;font:14.535px 'Liberation Sans';line-height:14.535px;color:#e8e8e8;-webkit-text-stroke:0.1px #e8e8e8;transform:scaleX(0.828)">C</div><div class=t style="left:489.57px;top:208px;font:14.535px 'Liberation Sans';line-height:14.535px;color:#e8e8e8;-webkit-text-stroke:0.1px #e8e8e8;transform:scaleX(0.883)">D</div><div class=t style="left:561.00px;top:208px;font:14.535px 'Liberation Sans';line-height:14.535px;color:#e8e8e8;-webkit-text-stroke:0.1px #e8e8e8;transform:scaleX(0.776)">E</div><div class=t style="left:631.39px;top:208px;font:14.535px 'Liberation Sans';line-height:14.535px;color:#e8e8e8;-webkit-text-stroke:0.1px #e8e8e8;transform:scaleX(0.784)">F</div><div class=t style="left:700.72px;top:208px;font:14.535px 'Liberation Sans';line-height:14.535px;color:#e8e8e8;-webkit-text-stroke:0.1px #e8e8e8;transform:scaleX(0.938)">G</div><div class=t style="left:9.46px;top:229px;font:14.826px 'Liberation Sans';line-height:14.826px;color:#e8e8e8;-webkit-text-stroke:0.1px #e8e8e8;transform:scaleX(0.950)">1</div><div class=t style="left:9.72px;top:249px;font:14.826px 'Liberation Sans';line-height:14.826px;color:#e8e8e8;-webkit-text-stroke:0.1px #e8e8e8;transform:scaleX(0.924)">2</div><div class=t style="left:10.01px;top:269px;font:14.826px 'Liberation Sans';line-height:14.826px;color:#e8e8e8;-webkit-text-stroke:0.1px #e8e8e8;transform:scaleX(0.867)">3</div><div class=t style="left:10.15px;top:290px;font:14.826px 'Liberation Sans';line-height:14.826px;color:#e8e8e8;-webkit-text-stroke:0.1px #e8e8e8;transform:scaleX(0.833)">4</div><div class=t style="left:9.88px;top:310px;font:14.826px 'Liberation Sans';line-height:14.826px;color:#e8e8e8;-webkit-text-stroke:0.1px #e8e8e8;transform:scaleX(0.885)">5</div><div class=t style="left:9.73px;top:330px;font:14.826px 'Liberation Sans';line-height:14.826px;color:#e8e8e8;-webkit-text-stroke:0.1px #e8e8e8;transform:scaleX(0.904)">6</div><div class=t style="left:9.72px;top:351px;font:14.826px 'Liberation Sans';line-height:14.826px;color:#e8e8e8;-webkit-text-stroke:0.1px #e8e8e8;transform:scaleX(0.924)">7</div><div class=t style="left:9.88px;top:371px;font:14.826px 'Liberation Sans';line-height:14.826px;color:#e8e8e8;-webkit-text-stroke:0.1px #e8e8e8;transform:scaleX(0.885)">8</div><div class=t style="left:9.86px;top:391px;font:14.826px 'Liberation Sans';line-height:14.826px;color:#e8e8e8;-webkit-text-stroke:0.1px #e8e8e8;transform:scaleX(0.904)">9</div><div class=t style="left:5.41px;top:412px;font:14.826px 'Liberation Sans';line-height:14.826px;color:#e8e8e8;-webkit-text-stroke:0.1px #e8e8e8;transform:scaleX(0.959)">10</div><div class=t style="left:5.31px;top:432px;font:14.826px 'Liberation Sans';line-height:14.826px;color:#e8e8e8;-webkit-text-stroke:0.1px #e8e8e8;transform:scaleX(1.046)">11</div><div class=t style="left:5.40px;top:452px;font:14.826px 'Liberation Sans';line-height:14.826px;color:#e8e8e8;-webkit-text-stroke:0.1px #e8e8e8;transform:scaleX(0.968)">12</div><div class=t style="left:5.41px;top:473px;font:14.826px 'Liberation Sans';line-height:14.826px;color:#e8e8e8;-webkit-text-stroke:0.1px #e8e8e8;transform:scaleX(0.959)">13</div><div class=t style="left:211.07px;top:229px;font:bold 13.663px 'Liberation Sans';line-height:13.663px;color:#000000;transform:scaleX(0.974)">CRITBINOM Function</div><div class=t style="left:99.98px;top:269px;font:bold 13.663px 'Liberation Sans';line-height:13.663px;color:#000000;transform:scaleX(0.999)">Number of trials</div><div class=t style="left:100.54px;top:289px;font:bold 13.808px 'Liberation Sans';line-height:13.808px;color:#000000;transform:scaleX(0.950)">Success Probability in every trial</div><div class=t style="left:100.44px;top:310px;font:bold 12.645px 'Liberation Sans';line-height:12.645px;color:#000000;transform:scaleX(1.039)">Alpha</div><div class=t style="left:100.16px;top:349px;font:bold 14.099px 'Liberation Sans';line-height:14.099px;color:#000000;transform:scaleX(0.949)">CRITBINOM formula</div><div class=t style="left:441.09px;top:270px;font:12.645px 'Liberation Sans';line-height:12.645px;color:#000000;transform:scaleX(1.071)">34</div><div class=t style="left:448.59px;top:290px;font:12.645px 'Liberation Sans';line-height:12.645px;color:#000000;transform:scaleX(1.117)">7</div><div class=t style="left:429.28px;top:310px;font:12.791px 'Liberation Sans';line-height:12.791px;color:#000000;transform:scaleX(1.091)">0.92</div><div class=t style="left:400.70px;top:350px;font:15.552px 'Liberation Sans';line-height:15.552px;color:#000000;transform:scaleX(0.976)">#NUM!</div>

<div class=a style="left:703px;top:204px;width:17px;height:273.5px;background:#171717"></div>
<svg class=a style="left:707.9px;top:208.2px" width="8" height="5.5" viewBox="0 0 8 5.5"><path d="M4 0 L8 5.5 H0 Z" fill="#9a9a9a"/></svg>
<div class=a style="left:707.8px;top:217.9px;width:7.6px;height:141.3px;background:#9b9b9b;border-radius:4px"></div>
<svg class=a style="left:707.8px;top:469px" width="8" height="6" viewBox="0 0 8 6"><path d="M0 0 H8 L4 6 Z" fill="#9a9a9a"/></svg>
<div class=a style="left:0;top:477px;width:720px;height:27px;background:#131812"></div>
<div class=a style="left:271.7px;top:477px;width:54.4px;height:23.8px;background:#fff;border-radius:0 0 4px 4px"></div>
<svg class=a style="left:267.7px;top:477.4px" width="4" height="4" viewBox="0 0 4 4"><path d="M0 0 H4 V4 A4 4 0 0 0 0 0 Z" fill="#fff"/></svg>
<svg class=a style="left:326.1px;top:477.4px" width="4" height="4" viewBox="0 0 4 4"><path d="M0 0 H4 A4 4 0 0 0 0 4 Z" fill="#fff"/></svg>
<div class=a style="left:278.7px;top:496.7px;width:40.3px;height:1.5px;background:#217346"></div>
<div class=a style="left:148.5px;top:483.5px;width:1px;height:14.5px;background:#4a4a4a"></div>
<div class=a style="left:207.3px;top:483.5px;width:1px;height:14.5px;background:#4a4a4a"></div>
<div class=a style="left:268.7px;top:483.5px;width:1px;height:14.5px;background:#4a4a4a"></div>
<div class=a style="left:329.4px;top:483.5px;width:1px;height:14.5px;background:#4a4a4a"></div>
<svg class=a style="left:18.5px;top:486.2px" width="5.5" height="8.5" viewBox="0 0 5.5 8.5" fill="none" stroke="#cfcfcf" stroke-width="1.1"><path d="M5 0.5 L1 4.25 L5 8"/></svg>
<svg class=a style="left:45.5px;top:486.2px" width="5.5" height="8.5" viewBox="0 0 5.5 8.5" fill="none" stroke="#a8a8a8" stroke-width="1.1"><path d="M0.5 0.5 L4.5 4.25 L0.5 8"/></svg>
<div class=a style="left:69.8px;top:489.2px;width:1.9px;height:1.9px;border-radius:50%;background:#e6e6e6"></div>
<div class=a style="left:73.4px;top:489.2px;width:1.9px;height:1.9px;border-radius:50%;background:#e6e6e6"></div>
<div class=a style="left:77.0px;top:489.2px;width:1.9px;height:1.9px;border-radius:50%;background:#e6e6e6"></div>
<div class=a style="left:364.6px;top:490px;width:8.3px;height:1.1px;background:#cfcfcf"></div>
<div class=a style="left:368.2px;top:486.3px;width:1.1px;height:8.3px;background:#cfcfcf"></div>
<div class=a style="left:434.2px;top:487.3px;width:1.6px;height:1.6px;background:#e6e6e6"></div>
<div class=a style="left:434.2px;top:490.5px;width:1.6px;height:1.6px;background:#e6e6e6"></div>
<div class=a style="left:434.2px;top:493.7px;width:1.6px;height:1.6px;background:#e6e6e6"></div>
<svg class=a style="left:452px;top:486.5px" width="6" height="7.2" viewBox="0 0 6 7.2"><path d="M0 3.6 L6 0 V7.2 Z" fill="#9a9a9a"/></svg>
<div class=a style="left:462.4px;top:487.1px;width:175.4px;height:6.4px;background:#9b9b9b;border-radius:3.2px"></div>
<svg class=a style="left:694.4px;top:486.7px" width="6" height="7.7" viewBox="0 0 6 7.7"><path d="M6 3.85 L0 0 V7.7 Z" fill="#9a9a9a"/></svg>
<div class=a style="left:0;top:504px;width:720px;height:18px;background:#121212"></div>
<div class=a style="left:0;top:503.6px;width:720px;height:0.8px;background:#2c2c2c"></div>
<div class=a style="left:466.3px;top:504.2px;width:32.5px;height:17.8px;background:#2a2a2a"></div>
<svg class=a style="left:47px;top:508px" width="13" height="10" viewBox="0 0 13 10" fill="none" stroke="#dcdcdc" stroke-width="1"><path d="M0.5 0.5 H12.5 M0.5 2.5 H12.5 M0.5 2.5 V9.5 H5 M12.5 2.5 V5"/><path d="M2 4.5 H5 M2 6.5 H5 M2 8.5 H5"/><circle cx="9.3" cy="7.2" r="2.6"/><circle cx="9.3" cy="7.2" r="1" fill="#dcdcdc"/></svg>
<svg class=a style="left:73px;top:507.5px" width="13" height="12" viewBox="0 0 13 12" fill="none" stroke="#e6e6e6" stroke-width="1"><circle cx="5.5" cy="1.9" r="1.4"/><path d="M0.8 3.2 C2.5 4.2 8.5 4.2 10.2 3.2 M5.5 4.3 V7.2 L3 11.3 M5.5 7.2 L6.5 9"/><path d="M7.8 7.8 L12 11.6 M12 7.8 L7.8 11.6"/></svg>
<svg class=a style="left:476px;top:507px" width="11.2" height="10.8" viewBox="0 0 11.2 10.8" fill="none" stroke="#e6e6e6" stroke-width="1.1"><rect x="0.55" y="0.55" width="10.1" height="9.7"/><path d="M3.9 0.5 V10.3 M7.3 0.5 V10.3 M0.5 3.8 H10.7 M0.5 7.1 H10.7"/></svg>
<svg class=a style="left:509.1px;top:507px" width="12.2" height="10.8" viewBox="0 0 12.2 10.8" fill="none" stroke="#dcdcdc" stroke-width="1.1"><rect x="0.55" y="0.55" width="11.1" height="9.7"/><rect x="3.5" y="2.8" width="5.2" height="5.2"/><path d="M4.5 4.5 H7.7 M4.5 6.3 H7.7" stroke-width="0.7"/></svg>
<svg class=a style="left:542px;top:507px" width="12.5" height="11" viewBox="0 0 12.5 11" fill="none" stroke="#dcdcdc" stroke-width="1.1"><path d="M3 0.55 H0.55 V10.45 H11.95 V0.55 H6.3"/><path d="M3.6 0.5 V5.8 H6.4 V0.5 M0.55 5.8 H3.6"/></svg>
<div class=a style="left:569.3px;top:512.4px;width:5.8px;height:1px;background:#9a9a9a"></div>
<div class=a style="left:580px;top:512.6px;width:81.8px;height:1px;background:#bdbdbd"></div>
<div class=a style="left:619px;top:507.8px;width:4.3px;height:9.5px;background:#bdbdbd;border-radius:1px"></div>
<div class=a style="left:666.2px;top:512.4px;width:6px;height:1px;background:#9a9a9a"></div>
<div class=a style="left:668.7px;top:509.9px;width:1px;height:6px;background:#9a9a9a"></div>
<div class=t style="left:97.06px;top:486px;font:12.718px 'Liberation Sans';line-height:12.718px;color:#e6e6e6;-webkit-text-stroke:0.25px #e6e6e6;transform:scaleX(0.870)">Sheet14</div><div class=t style="left:157.15px;top:486px;font:12.718px 'Liberation Sans';line-height:12.718px;color:#e6e6e6;-webkit-text-stroke:0.25px #e6e6e6;transform:scaleX(0.889)">Sheet11</div><div class=t style="left:217.25px;top:486px;font:12.718px 'Liberation Sans';line-height:12.718px;color:#e6e6e6;-webkit-text-stroke:0.25px #e6e6e6;transform:scaleX(0.877)">Sheet12</div><div class=t style="left:278.26px;top:485px;font:11.337px 'Liberation Sans';line-height:11.337px;color:#1e1e1e;-webkit-text-stroke:0.25px #1e1e1e;transform:scaleX(0.972)">Sheet16</div><div class=t style="left:8.59px;top:509px;font:10.901px 'Liberation Sans';line-height:10.901px;color:#c8c8c8;-webkit-text-stroke:0.25px #c8c8c8;transform:scaleX(0.759)">Ready</div><div class=t style="left:88.58px;top:510px;font:bold 10.174px 'Liberation Sans';line-height:10.174px;color:#e6e6e6;transform:scaleX(0.847)">Accessibility: Investigate</div><div class=t style="left:682.68px;top:510px;font:8.721px 'Liberation Sans';line-height:8.721px;color:#e6e6e6;-webkit-text-stroke:0.25px #e6e6e6;transform:scaleX(1.007)">100%</div>
</body></html>
